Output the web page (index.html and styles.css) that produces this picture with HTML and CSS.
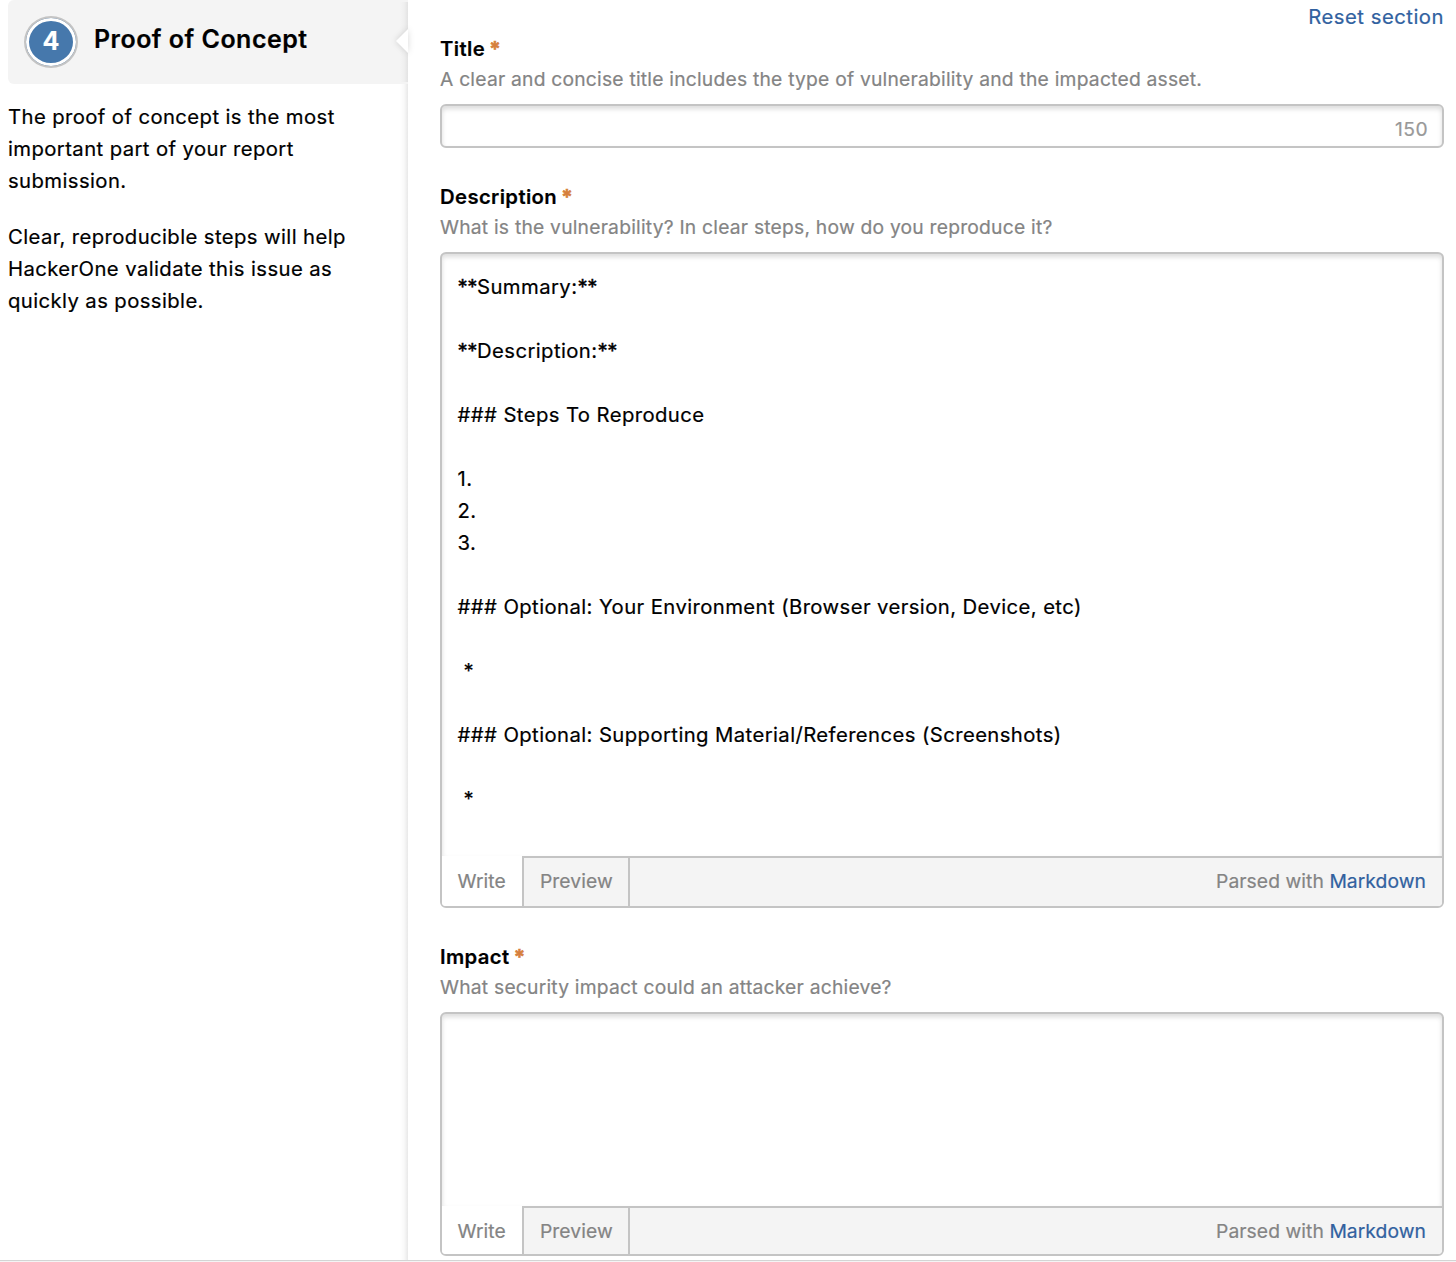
FILE: index.html
```html
<!DOCTYPE html>
<html lang="en">
<head>
<meta charset="utf-8">
<title>Submit report</title>
<link rel="stylesheet" href="styles.css">
</head>
<body>
<main class="page">
  <aside class="side">
    <header class="step">
      <span class="step-number">4</span>
      <h2 class="step-title">Proof of Concept</h2>
      <svg class="step-arrow" width="24" height="36" viewBox="0 0 24 36"><path d="M24 6 12 18 24 30Z" fill="#fff"/></svg>
    </header>
    <div class="help">
      <p>The proof of concept is the most<br>important part of your report<br>submission.</p>
      <p>Clear, reproducible steps will help<br>HackerOne validate this issue as<br>quickly as possible.</p>
    </div>
  </aside>
  <section class="form">
    <div class="actions"><a class="link">Reset section</a></div>
    <div class="field">
      <label class="label">Title <span class="required">*</span></label>
      <p class="hint">A clear and concise title includes the type of vulnerability and the impacted asset.</p>
      <div class="box input"><span class="count">150</span></div>
    </div>
    <div class="field">
      <label class="label">Description <span class="required">*</span></label>
      <p class="hint">What is the vulnerability? In clear steps, how do you reproduce it?</p>
      <div class="box editor">
        <pre class="text text-tall"><span class="mark">**</span>Summary:<span class="mark">**</span>

<span class="mark">**</span>Description:<span class="mark">**</span>

### Steps To Reproduce

1.
2.
3.

### Optional: Your Environment (Browser version, Device, etc)

 *

### Optional: Supporting Material/References (Screenshots)

 *</pre>
        <div class="tabs"><span class="tab tab-active">Write</span><span class="tab">Preview</span><span class="parsed">Parsed with <a class="link">Markdown</a></span></div>
      </div>
    </div>
    <div class="field">
      <label class="label">Impact <span class="required">*</span></label>
      <p class="hint">What security impact could an attacker achieve?</p>
      <div class="box editor">
        <pre class="text text-short"></pre>
        <div class="tabs tabs-short"><span class="tab tab-active">Write</span><span class="tab">Preview</span><span class="parsed">Parsed with <a class="link">Markdown</a></span></div>
      </div>
    </div>
  </section>
</main>
</body>
</html>
```
FILE: styles.css
```css
* { box-sizing: border-box; }
body {
  margin: 0;
  background: #f4f4f4;
  color: #000;
  font-family: Inter, sans-serif;
  font-size: 20.3px;
  line-height: 32px;
  letter-spacing: 0.4px;
  -webkit-text-stroke: .2px;
}
p, h2, pre { margin: 0; }
.page {
  display: flex;
  height: 1261px;
  overflow: hidden;
  border-bottom: 1px solid #d4d4d4;
  background: #fff;
}
.side {
  width: 408px;
  padding-left: 8px;
  display: flex;
  flex-direction: column;
}
.step {
  position: relative;
  display: flex;
  align-items: flex-start;
  height: 84px;
  padding: 16px 0 0 16px;
  border-radius: 6px 0 0 6px;
  background: linear-gradient(to left, rgba(0,0,0,.07), rgba(0,0,0,.02) 4px, transparent 8px) 0 2px / 100% 80px no-repeat #f4f4f4;
}
.step-number {
  width: 54px;
  height: 52px;
  border: 2px solid #c4c4c4;
  border-radius: 50%;
  background: #4678ac;
  box-shadow: inset 0 0 0 3px #fff;
  color: #fff;
  font-size: 25px;
  font-weight: 700;
  line-height: 47px;
  letter-spacing: 0;
  text-align: center;
}
.step-title {
  margin: 7px 0 0 16px;
  font-size: 25px;
  font-weight: 600;
  letter-spacing: .48px;
}
.step-arrow {
  position: absolute;
  top: 23px;
  right: 0;
  filter: drop-shadow(0 0 3px rgba(0,0,0,.16));
}
.help {
  flex: 1;
  padding-top: 17px;
  background: linear-gradient(to left, rgba(0,0,0,.09), rgba(0,0,0,.025) 4px, transparent 8px);
}
.help p { margin-bottom: 24px; }
.form {
  flex: 1;
  padding: 1px 12px 0 32px;
}
.actions { height: 32px; text-align: right; letter-spacing: .5px; }
.link { color: #31619f; }
.field { margin-bottom: 32px; }
.label { display: block; font-weight: 600; letter-spacing: .37px; }
.required { color: #d67f3c; margin-left: -1px; -webkit-text-stroke: .7px; }
.hint {
  height: 39px;
  font-size: 19.3px;
  line-height: 28px;
  letter-spacing: .207px;
  color: #848484;
}
.box {
  border: 2px solid #c4c4c4;
  border-radius: 6px;
  overflow: hidden;
}
.input {
  display: flex;
  justify-content: flex-end;
  height: 44px;
  margin-bottom: 33px;
  padding: 7px 14px 0 0;
  box-shadow: inset 0 3px 5px rgba(0,0,0,.14);
}
.editor { margin-bottom: 33px; }
.count { color: #999; font-size: 19.3px; line-height: 32px; }
.text {
  padding: 17px 16px 0 15.5px;
  font: inherit;
  letter-spacing: .41px;
  box-shadow: inset 0 3px 5px rgba(0,0,0,.14);
}
.mark { letter-spacing: -.4px; -webkit-text-stroke: .4px; }
.text-tall { height: 602px; }
.text-short { height: 192px; }
.tabs {
  display: flex;
  height: 50px;
  background: #f4f4f4;
  color: #848484;
  font-size: 19.3px;
  line-height: 47px;
  letter-spacing: .06px;
}
.tabs-short { height: 48px; }
.tab {
  width: 106px;
  padding-left: 16px;
  border-top: 2px solid #c4c4c4;
  border-right: 2px solid #c4c4c4;
}
.tab-active {
  width: 82px;
  padding: 2px 0 0 15.5px;
  border-top: 0;
  background: #fff;
}
.parsed {
  flex: 1;
  padding-right: 16px;
  border-top: 2px solid #c4c4c4;
  text-align: right;
}
```
